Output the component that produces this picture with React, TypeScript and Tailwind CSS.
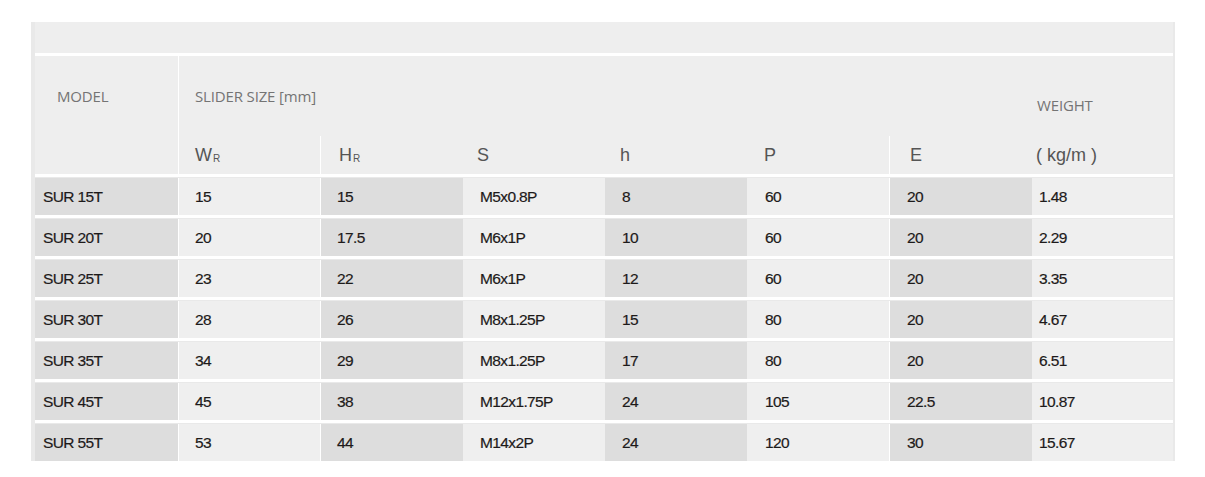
import React from 'react';

type Row = {
  model: string;
  wr: string;
  hr: string;
  s: string;
  h: string;
  p: string;
  e: string;
  weight: string;
};

const rows: Row[] = [
  { model: 'SUR 15T', wr: '15', hr: '15', s: 'M5x0.8P', h: '8', p: '60', e: '20', weight: '1.48' },
  { model: 'SUR 20T', wr: '20', hr: '17.5', s: 'M6x1P', h: '10', p: '60', e: '20', weight: '2.29' },
  { model: 'SUR 25T', wr: '23', hr: '22', s: 'M6x1P', h: '12', p: '60', e: '20', weight: '3.35' },
  { model: 'SUR 30T', wr: '28', hr: '26', s: 'M8x1.25P', h: '15', p: '80', e: '20', weight: '4.67' },
  { model: 'SUR 35T', wr: '34', hr: '29', s: 'M8x1.25P', h: '17', p: '80', e: '20', weight: '6.51' },
  { model: 'SUR 45T', wr: '45', hr: '38', s: 'M12x1.75P', h: '24', p: '105', e: '22.5', weight: '10.87' },
  { model: 'SUR 55T', wr: '53', hr: '44', s: 'M14x2P', h: '24', p: '120', e: '30', weight: '15.67' },
];

const dark = 'bg-[#dddddd]';
const light = 'bg-[#efefef]';

// header labels in the thin grey face, sub labels in the plain one
const thin = "font-['Open_Sans',sans-serif] text-[15px] text-[#747474] tracking-[-0.01em]";
const sub = "font-['Liberation_Sans',Arial,sans-serif] text-[18px] text-[#555555]";
const cell = 'flex items-center h-full';

export default function App() {
  return (
    <div className="w-[1205px] h-[477px] bg-white pt-[22px] pl-[31px]">
      <div className="w-[1144px] bg-[#e9e9e9] pl-[4px] pr-[2px]">
        {/* empty title band */}
        <div className="h-[31px] bg-[#eeeeee]" />
        <div className="h-[3px] bg-white" />

        {/* header */}
        <div className="flex h-[118px] bg-[#eeeeee]">
          <div className="w-[143px] shrink-0">
            <div className={`h-[80px] flex items-center pl-[22px] ${thin}`}>MODEL</div>
          </div>
          <div className="flex-1 flex flex-col border-l border-white">
            <div className="h-[80px] flex">
              <div className={`w-[853px] flex items-center pl-[16px] ${thin}`}>SLIDER SIZE [mm]</div>
              <div className={`flex-1 flex items-center pl-[5px] pt-[19px] ${thin}`}>WEIGHT</div>
            </div>
            <div className={`h-[38px] flex ${sub}`}>
              <div className={`${cell} w-[141px] pl-[16px] pt-[1px]`}>
                W<span className="text-[10px] ml-[1px] mt-[5px]">R</span>
              </div>
              <div className={`${cell} w-[143px] border-l border-white pl-[18px] pt-[1px]`}>
                H<span className="text-[10px] ml-[1px] mt-[5px]">R</span>
              </div>
              <div className={`${cell} w-[142px] pl-[14px] pt-[1px]`}>S</div>
              <div className={`${cell} w-[142px] pl-[15px] pt-[1px]`}>h</div>
              <div className={`${cell} w-[142px] pl-[17px] pt-[1px]`}>P</div>
              <div className={`${cell} w-[143px] border-l border-white pl-[20px] pt-[1px]`}>E</div>
              <div className={`${cell} flex-1 pl-[4px] pt-[1px] whitespace-pre`}>( kg/m )</div>
            </div>
          </div>
        </div>

        {rows.map((r) => (
          <React.Fragment key={r.model}>
            <div className="h-[3px] bg-white" />
            <div className="flex h-[38px] pt-[1px] font-['Liberation_Sans',Arial,sans-serif] text-[15.5px] text-[#1d1a1a] tracking-[-0.04em] [-webkit-text-stroke:0.2px]">
              <div className={`${cell} ${dark} w-[143px] pl-[8px]`}>{r.model}</div>
              <div className={`${cell} ${light} w-[142px] border-l border-white pl-[16px]`}>{r.wr}</div>
              <div className={`${cell} ${dark} w-[143px] border-l border-white pl-[16px]`}>{r.hr}</div>
              <div className={`${cell} ${light} w-[142px] pl-[17px]`}>{r.s}</div>
              <div className={`${cell} ${dark} w-[142px] pl-[17px]`}>{r.h}</div>
              <div className={`${cell} ${light} w-[142px] pl-[18px]`}>{r.p}</div>
              <div className={`${cell} ${dark} w-[143px] border-l border-white pl-[17px]`}>{r.e}</div>
              <div className={`${cell} ${light} flex-1 pl-[7px]`}>{r.weight}</div>
            </div>
          </React.Fragment>
        ))}
      </div>
    </div>
  );
}
